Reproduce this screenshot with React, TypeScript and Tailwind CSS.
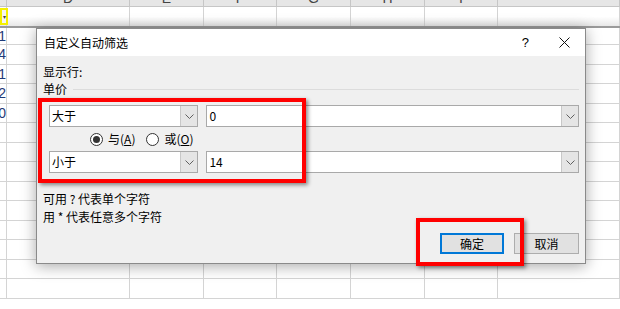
const cols = [
  { w: 'w-[7px]', label: '' },
  { w: 'w-[123px]', label: 'D' },
  { w: 'w-[74px]', label: 'E' },
  { w: 'w-[73px]', label: 'F' },
  { w: 'w-[74px]', label: 'G' },
  { w: 'w-[74px]', label: 'H' },
  { w: 'w-[73px]', label: 'I' },
  { w: 'flex-1', label: '' },
];

const leftNums = ['1', '4', '1', '2', '0'];

function Chevron() {
  return (
    <svg width="9" height="5" viewBox="0 0 9 5" className="text-[#606060]">
      <path d="M0.5 0.5 L4.5 4.5 L8.5 0.5" fill="none" stroke="currentColor" strokeWidth="1" />
    </svg>
  );
}

function ComboBox({ value, width }: { value: string; width: string }) {
  return (
    <div className={`${width} h-[22px] flex bg-white border border-[#a9a9a9]`}>
      <div className="flex-1 flex items-center pl-[2px] text-[12px] text-black">{value}</div>
      <div className="w-[17px] flex items-center justify-center bg-[#e5e5e5] border-l border-[#c8c8c8]">
        <Chevron />
      </div>
    </div>
  );
}

function Radio({ checked, label, hot }: { checked: boolean; label: string; hot: string }) {
  return (
    <div className="flex items-center gap-[5px]">
      <div className="w-[13px] h-[13px] rounded-full border border-[#333] bg-white flex items-center justify-center">
        {checked && <div className="w-[7px] h-[7px] rounded-full bg-[#333]" />}
      </div>
      <span className="text-[12px] text-black">
        {label}(<span className="underline">{hot}</span>)
      </span>
    </div>
  );
}

export default function App() {
  return (
    <div
      className="relative w-[620px] h-[309px] overflow-hidden bg-white"
      style={{ fontFamily: '"Noto Sans CJK SC", "Liberation Sans", sans-serif' }}
    >
      {/* 表格背景 */}
      <div className="flex flex-col">
        <div className="flex h-[7px] bg-[#e6e6e6] border-b border-[#c6c6c6]">
          {cols.map((c, i) => (
            <div
              key={i}
              className={`${c.w} border-r border-[#c6c6c6] overflow-hidden flex justify-center items-end`}
            >
              <span className="text-[14px] leading-[14px] text-[#444] -mb-[0px] translate-y-[-1px]" style={{ fontFamily: '"Liberation Sans", sans-serif' }}>{c.label}</span>
            </div>
          ))}
        </div>
        <div className="flex h-[21px] bg-gradient-to-b from-white via-white to-[#e8e8e8] border-b-2 border-[#9b9b9b]">
          {cols.map((c, i) => (
            <div key={i} className={`${c.w} border-r border-[#d4d4d4] relative`}>
              {i === 0 && (
                <div className="absolute left-0 top-[1px] w-[8px] h-[17px] border-2 border-[#f5f000] bg-[#f4f4f4] flex items-center justify-center">
                  <span className="text-[6px] leading-none text-[#444]">▾</span>
                </div>
              )}
            </div>
          ))}
        </div>
        {Array.from({ length: 14 }).map((_, r) => (
          <div key={r} className={`flex ${r === 0 ? 'h-[17px]' : 'h-[19.5px]'} border-b border-[#d4d4d4]`}>
            {cols.map((c, i) => (
              <div key={i} className={`${c.w} border-r border-[#d4d4d4] overflow-hidden flex items-center justify-end`}>
                {i === 0 && r < 5 && (
                  <span className="text-[14px] leading-none text-[#1f3a78]" style={{ fontFamily: '"Liberation Sans", sans-serif' }}>
                    {leftNums[r]}
                  </span>
                )}
              </div>
            ))}
          </div>
        ))}
      </div>

      {/* 对话框 */}
      <div className="absolute left-[36px] top-[28px] w-[550px] h-[236px] border border-[#8a8a8a] bg-[#f0f0f0] shadow-[0_2px_14px_rgba(0,0,0,0.35)] flex flex-col">
        <div className="h-[27px] bg-white flex items-center pl-[7px] text-[12px] text-black">
          <span>自定义自动筛选</span>
          <span className="ml-auto text-[13px] mr-[30px]" style={{ fontFamily: '"Liberation Sans", sans-serif' }}>?</span>
          <svg width="11" height="11" viewBox="0 0 11 11" className="mr-[15px]">
            <path d="M0.5 0.5 L10.5 10.5 M10.5 0.5 L0.5 10.5" stroke="#111" strokeWidth="1" />
          </svg>
        </div>

        <div className="flex-1 flex flex-col px-[6px] text-[12px] text-black">
          <div className="mt-[8px] h-[16px] leading-[16px]">显示行:</div>
          <div className="mt-[1px] h-[16px] leading-[16px] flex items-center gap-[6px]">
            <span>单价</span>
            <div className="flex-1 h-px bg-[#dcdcdc]" />
          </div>

          <div className="mt-[8px] pl-[6px] flex gap-[8px]">
            <ComboBox value="大于" width="w-[150px]" />
            <ComboBox value="0" width="w-[374px]" />
          </div>
          <div className="h-[24px] flex items-center gap-[11px] pl-[47px]">
            <Radio checked label="与" hot="A" />
            <Radio checked={false} label="或" hot="O" />
          </div>
          <div className="pl-[6px] flex gap-[8px]">
            <ComboBox value="小于" width="w-[150px]" />
            <ComboBox value="14" width="w-[374px]" />
          </div>

          <div className="mt-[18px] h-[16px] leading-[16px]">可用 ? 代表单个字符</div>
          <div className="mt-[2px] h-[16px] leading-[16px]">用 * 代表任意多个字符</div>

          <div className="mt-[8px] flex justify-end gap-[10px] pr-[0px]">
            <button className="w-[64px] h-[21px] bg-[#e1e1e1] border-2 border-[#0078d7] text-[12px] leading-none">确定</button>
            <button className="w-[65px] h-[21px] bg-[#e1e1e1] border border-[#adadad] text-[12px] leading-none">取消</button>
          </div>
        </div>

        {/* 红框标注 */}
        <div className="absolute left-[1px] top-[69px] w-[268px] h-[85px] border-[4px] border-[#ff0000] shadow-[2px_2px_4px_rgba(0,0,0,0.45)]" />
        <div className="absolute left-[379px] top-[189px] w-[108px] h-[48px] border-[4px] border-[#ff0000] shadow-[2px_2px_4px_rgba(0,0,0,0.45)]" />
      </div>
    </div>
  );
}
